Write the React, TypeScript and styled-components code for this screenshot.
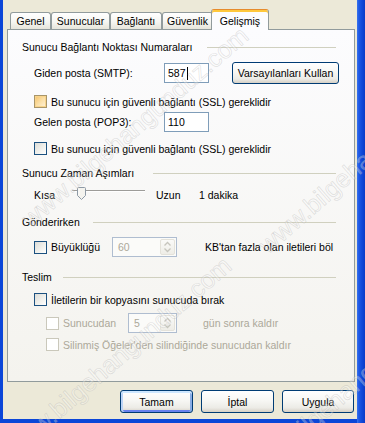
import React from 'react';
import styled, { createGlobalStyle, css } from 'styled-components';

const Global = createGlobalStyle`
  html, body { margin: 0; padding: 0; background: #ECE9D8; }
  body { font-family: "Liberation Sans", Arial, sans-serif; font-size: 10.5px; color: #000; }
  * { box-sizing: border-box; }
`;

const Frame = styled.div`
  position: relative;
  width: 365px;
  height: 423px;
  overflow: hidden;
  background: #0B46D8;
  padding: 0 8px 4px 3px;
`;

const RightEdge = styled.div`
  position: absolute;
  top: 0;
  right: 0;
  width: 8px;
  height: 100%;
  background: linear-gradient(90deg, #3A73EE 0, #1D58E4 2px, #0F48D9 5px, #0A3CC8 8px);
`;

const Body = styled.div`
  width: 354px;
  height: 419px;
  padding: 9px 2px 0 4px;
  display: flex;
  flex-direction: column;
  background: #ECE9D8;
`;

const TabStrip = styled.div`
  display: flex;
  align-items: flex-end;
  height: 21px;
  padding-left: 3px;
  margin-bottom: -1px;
  position: relative;
  z-index: 1;
`;

const Tab = styled.div<{ $w: number; $active?: boolean }>`
  width: ${p => p.$w}px;
  display: flex;
  align-items: center;
  justify-content: center;
  border: 1px solid #919B9C;
  border-bottom: none;
  border-radius: 3px 3px 0 0;
  ${p =>
    p.$active
      ? css`
          height: 21px;
          margin-left: -2px;
          border-top: 1px solid #E68B2C;
          box-shadow: inset 0 2px 0 #FFC83C;
          background: #FCFCFE;
          padding-top: 1px;
        `
      : css`
          height: 17px;
          margin-bottom: 1px;
          background: linear-gradient(180deg, #FFFFFF 0%, #F6F6F2 55%, #E6E4DA 100%);
        `}
`;

const Panel = styled.div`
  width: 348px;
  height: 353px;
  border: 1px solid #919B9C;
  background: linear-gradient(180deg, #FCFCFE 0%, #F4F3EE 100%);
  padding: 0 18px 0 14px;
  display: flex;
  flex-direction: column;
`;

const GroupTitle = styled.div<{ $mt: number }>`
  height: 12px;
  margin-top: ${p => p.$mt}px;
  display: flex;
  align-items: center;
  white-space: nowrap;
`;

const GroupLine = styled.div<{ $gap: number }>`
  flex: 1;
  height: 1px;
  margin-left: ${p => p.$gap}px;
  background: #D0D0BF;
`;

const Row = styled.div<{ $mt: number; $h: number; $indent: number }>`
  height: ${p => p.$h}px;
  margin-top: ${p => p.$mt}px;
  padding-left: ${p => p.$indent}px;
  display: flex;
  align-items: center;
  white-space: nowrap;
`;

const Label = styled.span<{ $w?: number; $ml?: number; $disabled?: boolean }>`
  ${p => (p.$w ? `width: ${p.$w}px; flex: none;` : '')}
  margin-left: ${p => p.$ml ?? 0}px;
  color: ${p => (p.$disabled ? '#ACA899' : '#000')};
`;

const TextBox = styled.div<{ $w: number }>`
  width: ${p => p.$w}px;
  height: 20px;
  border: 1px solid #7F9DB9;
  background: #FFFFFF;
  padding-left: 3px;
  display: flex;
  align-items: center;
  flex: none;
`;

const Caret = styled.span`
  display: inline-block;
  width: 1px;
  height: 13px;
  background: #000;
  margin-left: 1px;
`;

const XPButton = styled.button<{ $w: number; $h: number; $default?: boolean; $ml?: number }>`
  width: ${p => p.$w}px;
  height: ${p => p.$h}px;
  margin-left: ${p => p.$ml ?? 0}px;
  flex: none;
  border: 1px solid #003C74;
  border-radius: 3px;
  background: linear-gradient(180deg, #FFFFFF 0%, #F7F7F4 45%, #ECEBE6 80%, #D6D0C5 100%);
  font-family: "Liberation Sans", Arial, sans-serif;
  font-size: 10.5px;
  color: #000;
  padding: 0;
  ${p =>
    p.$default &&
    css`
      box-shadow: inset 0 2px 0 #CEE7FF, inset 2px 0 0 #BCD4F6, inset -2px 0 0 #89ADE4, inset 0 -2px 0 #6982EE;
    `}
`;

type BoxState = 'normal' | 'hover' | 'disabled';

const Box = styled.span<{ $state: BoxState }>`
  width: 13px;
  height: 13px;
  flex: none;
  display: inline-block;
  ${p =>
    p.$state === 'disabled'
      ? css`
          border: 1px solid #CAC8BB;
          background: #FFFFFF;
        `
      : p.$state === 'hover'
      ? css`
          border: 1px solid #A8956A;
          background: linear-gradient(135deg, #F5C26A 0%, #FBDFA6 50%, #FFF3DA 100%);
          box-shadow: inset 0 0 0 1px #F8D48C;
        `
      : css`
          border: 1px solid #1C5180;
          background: linear-gradient(135deg, #DCDCD7 0%, #F2F2EE 60%, #FFFFFF 100%);
        `}
`;

const CheckWrap = styled.span<{ $w?: number }>`
  display: flex;
  align-items: center;
  gap: 4px;
  ${p => (p.$w ? `width: ${p.$w}px; flex: none;` : '')}
`;

const Check: React.FC<{ state?: BoxState; label: string; w?: number }> = ({ state = 'normal', label, w }) => (
  <CheckWrap $w={w}>
    <Box $state={state} />
    <Label $disabled={state === 'disabled'}>{label}</Label>
  </CheckWrap>
);

const Spin = styled.div<{ $w: number }>`
  width: ${p => p.$w}px;
  height: 20px;
  flex: none;
  border: 1px solid #AFBDD0;
  background: #FBFBF9;
  display: flex;
  align-items: center;
  padding: 1px 1px 1px 5px;
  color: #ACA899;
`;

const SpinValue = styled.span`
  flex: 1;
`;

const SpinButtons = styled.div`
  width: 15px;
  height: 16px;
  border: 1px solid #E4E2DA;
  border-radius: 2px;
  background: linear-gradient(180deg, #FAFAF8, #EEEDE7);
  display: flex;
  align-items: center;
  justify-content: center;
`;

const SliderBox = styled.div`
  position: relative;
  width: 77px;
  height: 20px;
  flex: none;
`;

const Track = styled.div`
  position: absolute;
  left: 2px;
  right: 2px;
  top: 5px;
  height: 2px;
  border-top: 1px solid #9D9C99;
  border-bottom: 1px solid #FFFFFF;
`;

const Thumb = styled.svg`
  position: absolute;
  left: 7px;
  top: 2px;
`;

const ButtonRow = styled.div`
  display: flex;
  justify-content: flex-end;
  gap: 8px;
  margin-top: 8px;
  padding-right: 1px;
`;

const Watermark = styled.div<{ $x: number; $y: number }>`
  position: absolute;
  left: ${p => p.$x}px;
  top: ${p => p.$y}px;
  transform-origin: 0 50%;
  transform: rotate(-41deg);
  font-family: "Liberation Sans", Arial, sans-serif;
  font-size: 25px;
  line-height: 26px;
  margin-top: -13px;
  white-space: nowrap;
  color: rgba(255, 255, 255, 0.3);
  -webkit-text-stroke: 0.7px rgba(160, 160, 160, 0.3);
  pointer-events: none;
  z-index: 5;
`;

const SpinArrows: React.FC = () => (
  <svg width="9" height="12" viewBox="0 0 9 12">
    <path d="M1.5 4.5 L4.5 1.5 L7.5 4.5" fill="none" stroke="#C6C5BD" strokeWidth="1.3" />
    <path d="M1.5 7.5 L4.5 10.5 L7.5 7.5" fill="none" stroke="#C6C5BD" strokeWidth="1.3" />
  </svg>
);

export default function App() {
  return (
    <>
      <Global />
      <Frame>
        <Body>
          <TabStrip>
            <Tab $w={41}>Genel</Tab>
            <Tab $w={59}>Sunucular</Tab>
            <Tab $w={52}>Bağlantı</Tab>
            <Tab $w={51}>Güvenlik</Tab>
            <Tab $w={58} $active>Gelişmiş</Tab>
          </TabStrip>
          <Panel>
            <GroupTitle $mt={11}>
              Sunucu Bağlantı Noktası Numaraları
              <GroupLine $gap={15} />
            </GroupTitle>
            <Row $mt={9} $h={22} $indent={12}>
              <Label $w={130}>Giden posta (SMTP):</Label>
              <TextBox $w={45}>
                587<Caret />
              </TextBox>
              <XPButton $w={107} $h={22} $ml={23}>Varsayılanları Kullan</XPButton>
            </Row>
            <Row $mt={11} $h={13} $indent={12}>
              <Check state="hover" label="Bu sunucu için güvenli bağlantı (SSL) gereklidir" />
            </Row>
            <Row $mt={4} $h={20} $indent={12}>
              <Label $w={130}>Gelen posta (POP3):</Label>
              <TextBox $w={45}>110</TextBox>
            </Row>
            <Row $mt={10} $h={13} $indent={12}>
              <Check label="Bu sunucu için güvenli bağlantı (SSL) gereklidir" />
            </Row>

            <GroupTitle $mt={12}>
              Sunucu Zaman Aşımları
              <GroupLine $gap={19} />
            </GroupTitle>
            <Row $mt={6} $h={20} $indent={12}>
              <Label $w={36}>Kısa</Label>
              <SliderBox>
                <Track />
                <Thumb width="9" height="13" viewBox="0 0 9 13">
                  <path
                    d="M1.5 0.5 H7.5 Q8.5 0.5 8.5 1.5 V8.5 L4.5 12.5 L0.5 8.5 V1.5 Q0.5 0.5 1.5 0.5 Z"
                    fill="#F4F3EE"
                    stroke="#8E9AA6"
                    strokeWidth="1"
                  />
                  <path d="M2 2 V8" stroke="#FFFFFF" strokeWidth="1" />
                </Thumb>
              </SliderBox>
              <Label $w={43} $ml={9}>Uzun</Label>
              <Label>1 dakika</Label>
            </Row>

            <GroupTitle $mt={11}>
              Gönderirken
              <GroupLine $gap={13} />
            </GroupTitle>
            <Row $mt={9} $h={20} $indent={12}>
              <Check label="Büyüklüğü" w={78} />
              <Spin $w={65}>
                <SpinValue>60</SpinValue>
                <SpinButtons>
                  <SpinArrows />
                </SpinButtons>
              </Spin>
              <Label $ml={28}>KB'tan fazla olan iletileri böl</Label>
            </Row>

            <GroupTitle $mt={14}>
              Teslim
              <GroupLine $gap={11} />
            </GroupTitle>
            <Row $mt={10} $h={13} $indent={12}>
              <Check label="İletilerin bir kopyasını sunucuda bırak" />
            </Row>
            <Row $mt={7} $h={20} $indent={24}>
              <Check state="disabled" label="Sunucudan" w={82} />
              <Spin $w={49}>
                <SpinValue>5</SpinValue>
                <SpinButtons>
                  <SpinArrows />
                </SpinButtons>
              </Spin>
              <Label $disabled $ml={26}>gün sonra kaldır</Label>
            </Row>
            <Row $mt={5} $h={13} $indent={24}>
              <Check state="disabled" label="Silinmiş Öğeler'den silindiğinde sunucudan kaldır" />
            </Row>
          </Panel>
          <ButtonRow>
            <XPButton $w={73} $h={23} $default>Tamam</XPButton>
            <XPButton $w={73} $h={23}>İptal</XPButton>
            <XPButton $w={72} $h={23}>Uygula</XPButton>
          </ButtonRow>
        </Body>
        <RightEdge />
        <Watermark $x={25} $y={222}>www.bilgehangunduz.com</Watermark>
        <Watermark $x={8} $y={452}>www.bilgehangunduz.com</Watermark>
        <Watermark $x={262} $y={248}>www.bilgehangunduz.com</Watermark>
        <Watermark $x={245} $y={478}>www.bilgehangunduz.com</Watermark>
      </Frame>
    </>
  );
}
